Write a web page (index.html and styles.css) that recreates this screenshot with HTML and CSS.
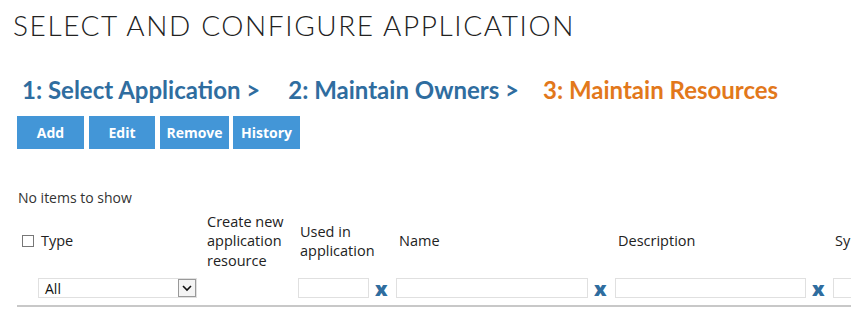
FILE: index.html
```html
<!DOCTYPE html>
<html lang="en">
<head>
<meta charset="UTF-8">
<meta name="viewport" content="width=device-width, initial-scale=1.0">
<title>Select and Configure Application</title>
<link rel="stylesheet" href="styles.css">
</head>
<body>
  <h1 class="page-title">SELECT AND CONFIGURE APPLICATION</h1>

  <div class="steps">
    <span class="step">1: Select Application &gt;</span>
    <span class="step">2: Maintain Owners &gt;</span>
    <span class="step current">3: Maintain Resources</span>
  </div>

  <div class="toolbar">
    <button class="btn btn-add">Add</button>
    <button class="btn btn-edit">Edit</button>
    <button class="btn btn-remove">Remove</button>
    <button class="btn btn-history">History</button>
  </div>

  <p class="empty">No items to show</p>

  <div class="grid">
    <div class="head c1"><span class="check"></span>Type</div>
    <div class="head c2">Create new<br>application<br>resource</div>
    <div class="head c3">Used in<br>application</div>
    <div class="head c4">Name</div>
    <div class="head c5">Description</div>
    <div class="head c6">Sy</div>

    <div class="filter c1">
      <div class="select"><span>All</span><span class="arrow"></span></div>
    </div>
    <div class="filter c2"></div>
    <div class="filter c3"><input class="box w-used" type="text"><span class="clear">x</span></div>
    <div class="filter c4"><input class="box w-name" type="text"><span class="clear">x</span></div>
    <div class="filter c5"><input class="box w-desc" type="text"><span class="clear">x</span></div>
    <div class="filter c6"><input class="box w-sys" type="text"></div>
  </div>
</body>
</html>
```
FILE: styles.css
```css
body {
  margin: 0;
  padding: 0;
  font-family: "Open Sans", "Noto Sans", sans-serif;
  color: #222;
  background-color: #fff;
  overflow: hidden;
}

/* Page header */
.page-title {
  margin: 0;
  padding: 8px 0 0 13px;
  font-family: "Lato", sans-serif;
  font-weight: 300;
  font-size: 28px;
  letter-spacing: 1.6px;
  color: #222;
  line-height: 34px;
}

/* Wizard steps */
.steps {
  display: flex;
  gap: 28px;
  padding: 34px 0 0 22px;
  font-family: "Lato", sans-serif;
  font-weight: 700;
  font-size: 24px;
  line-height: 28px;
}

.step {
  color: #2f6d9f;
}

.step.current {
  color: #e2781b;
  margin-left: -4px;
}

/* Buttons */
.toolbar {
  display: flex;
  gap: 5px;
  padding: 12px 0 0 17px;
}

.btn {
  height: 33px;
  border: none;
  background-color: #4396d7;
  color: #fff;
  font-family: "Open Sans", sans-serif;
  font-weight: 700;
  font-size: 14px;
  padding: 0;
  cursor: pointer;
}

.btn-add { width: 67px; }
.btn-edit { width: 66px; }
.btn-remove { width: 69px; }
.btn-history { width: 67px; margin-left: -1px; }

.empty {
  margin: 0 0 5px;
  padding: 40px 0 0 18px;
  font-size: 14px;
  line-height: 18px;
  color: #333;
}

/* Resource grid */
.grid {
  display: grid;
  grid-template-columns: 187px 92px 98px 219px 218px 20px;
  margin-left: 17px;
  width: 834px;
  border-bottom: 2px solid #c8c8c8;
  font-size: 14.5px;
}

.head {
  display: flex;
  align-items: center;
  height: 58px;
  line-height: 19.5px;
  font-weight: 500;
  color: #222;
  white-space: nowrap;
}

.head.c1 { padding-left: 5px; }
.head.c2 { padding-left: 3px; }
.head.c3 { padding-left: 4px; }
.head.c4, .head.c5 { padding-left: 5px; }
.head.c6 { padding-left: 4px; }

.c6 {
  overflow: hidden;
}

.check {
  width: 10px;
  height: 10px;
  border: 1px solid #777;
  margin-right: 7px;
}

.filter {
  display: flex;
  align-items: center;
  height: 20px;
  padding: 8px 0 7px 2px;
}

.filter.c1 { padding-left: 21px; }

.select {
  display: flex;
  justify-content: space-between;
  align-items: center;
  width: 159px;
  height: 20px;
  border: 1px solid #e0e0e0;
  box-sizing: border-box;
  padding-left: 6px;
  font-size: 14px;
  color: #111;
}

.arrow {
  width: 18px;
  height: 18px;
  border: 1px solid #999;
  box-sizing: border-box;
  background: #f4f4f4 url("data:image/svg+xml,%3Csvg xmlns='http://www.w3.org/2000/svg' width='16' height='16'%3E%3Cpath d='M4 6l4 4 4-4' fill='none' stroke='%23111' stroke-width='1.6'/%3E%3C/svg%3E") no-repeat center;
}

.box {
  height: 20px;
  border: 1px solid #e0e0e0;
  box-sizing: border-box;
  padding: 0 4px;
  margin: 0;
  flex-shrink: 0;
}

.w-used { width: 71px; }
.w-name { width: 192px; }
.w-desc { width: 191px; }
.w-sys { width: 60px; }

.clear {
  margin-left: 6px;
  font-family: "Open Sans", sans-serif;
  font-weight: 800;
  font-size: 20px;
  line-height: 20px;
  color: #2f6d9f;
  padding-top: 2px;
}
```
